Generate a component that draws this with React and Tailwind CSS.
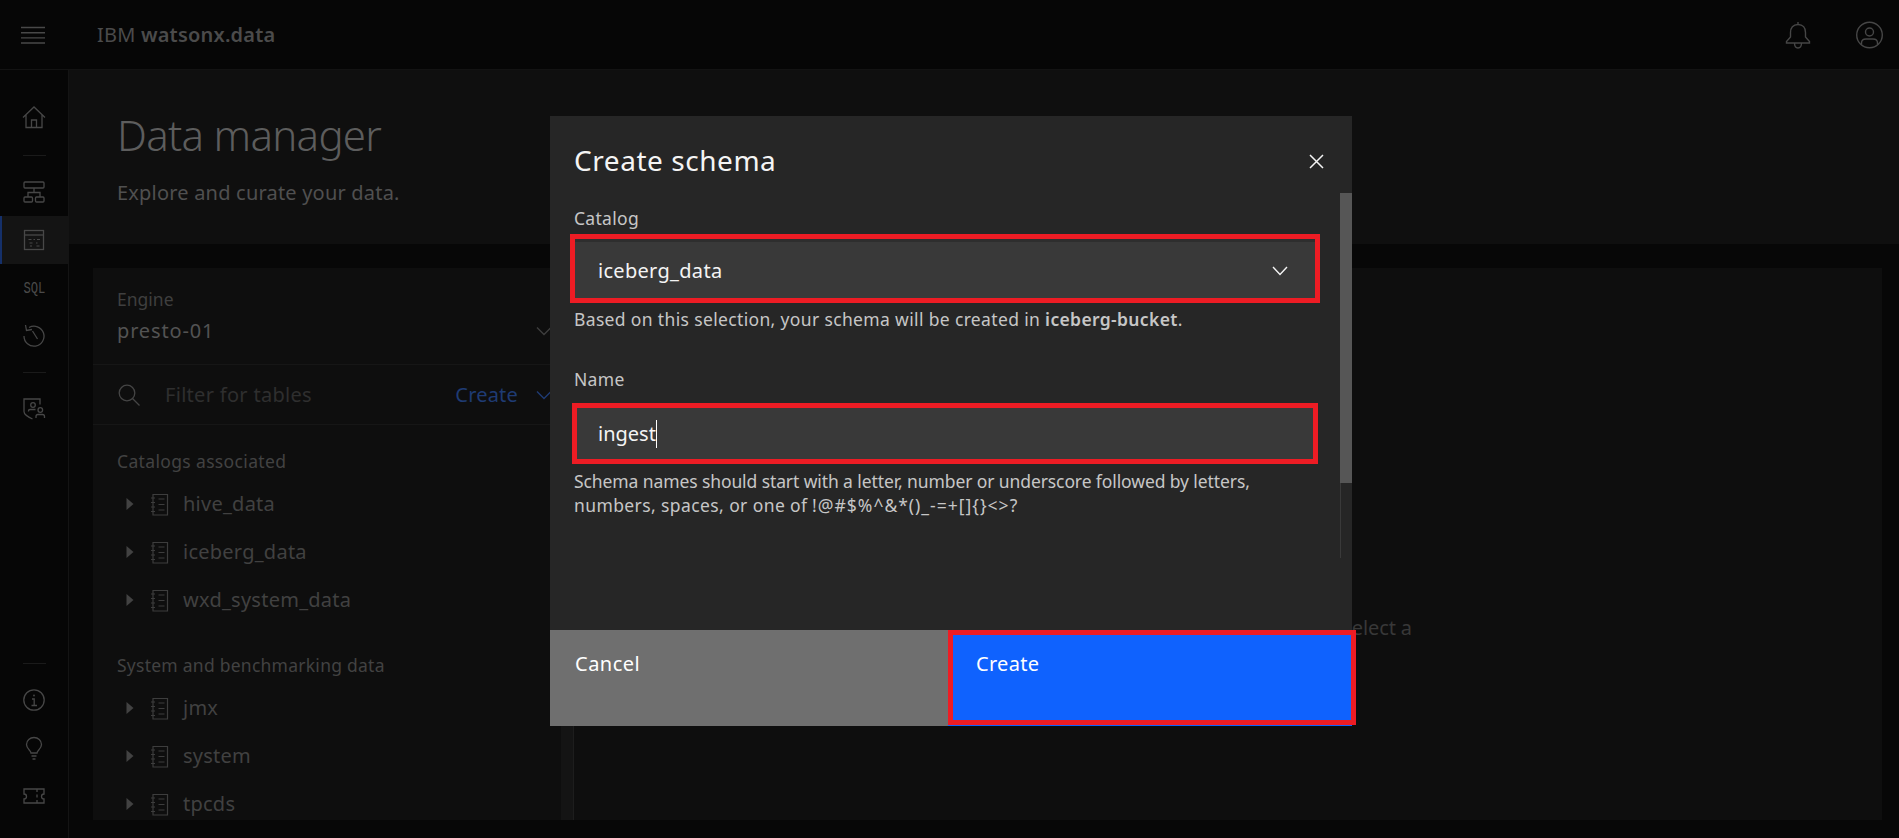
import React from "react";

const Ico = ({ w = 24, h = 24, vb, c = "#474747", sw = 1.3, children }) => (
  <svg width={w} height={h} viewBox={vb || `0 0 ${w} ${h}`} fill="none" stroke={c} strokeWidth={sw} className="block shrink-0">
    {children}
  </svg>
);

const Slot = ({ active, children }) => (
  <div className={`relative flex h-12 w-full items-center justify-center ${active ? "bg-[#141414]" : ""}`}>
    {active && <div className="absolute bottom-0 left-0 top-0 w-[2px] bg-[#15306a]" />}
    {children}
  </div>
);

const Sep = ({ cls }) => <div className={`mx-auto h-px w-[23px] bg-[#1a1a1a] ${cls}`} />;

const Notebook = () => (
  <Ico w={20} h={24} c="#3d3d3d" sw={1.2}>
    <path d="M3 2.5H17.5V23H3Z" />
    <path d="M1 6H5M1 10.5H5M1 15H5M1 19.5H5M8.5 7H14.5M8.5 12.5H14.5M8.5 18H14.5" />
  </Ico>
);

const Caret = () => (
  <svg width="8" height="12" viewBox="0 0 8 12" className="block shrink-0">
    <path d="M0.5 0L7.5 6L0.5 12Z" fill="#424242" />
  </svg>
);

const Row = ({ name }) => (
  <div className="flex h-12 shrink-0 items-center pl-[33px]">
    <Caret />
    <div className="ml-[16px]"><Notebook /></div>
    <span className="ml-[13px] text-[20px] tracking-[0.25px] text-[#414141]">{name}</span>
  </div>
);

const Chevron = ({ c, w = 16 }) => (
  <Ico w={w} h={10} c={c} sw={1.4}>
    <path d={`M1 1.5L${w / 2} 8.5L${w - 1} 1.5`} />
  </Ico>
);

export default function App() {
  return (
    <div className="relative flex h-[838px] w-[1899px] flex-col overflow-hidden bg-[#070707] font-['Noto_Sans',sans-serif]">
      <header className="flex h-[70px] shrink-0 items-center border-b border-[#131313] bg-[#060606]">
        <div className="ml-[21px]">
          <Ico w={24} h={18} c="#484848" sw={1.4}>
            <path d="M0 1.5H24M0 6.7H24M0 11.9H24M0 17H24" />
          </Ico>
        </div>
        <div className="ml-[52px] text-[20px] tracking-[0.2px] text-[#4b4b4b]">
          IBM <span className="font-semibold">watsonx.data</span>
        </div>
        <div className="ml-auto mr-[16px] flex items-center gap-[45px]">
          <Ico w={26} h={28} c="#464646" sw={1.4}>
            <path d="M13 1V3.5M13 3.5C8 3.5 5.5 7 5.5 11.5V16L1.5 20.5V22H24.5V20.5L20.5 16V11.5C20.5 7 18 3.5 13 3.5Z" />
            <path d="M9.5 22C9.5 25 11 27 13 27C15 27 16.5 25 16.5 22" />
          </Ico>
          <Ico w={27} h={28} c="#464646" sw={1.4}>
            <circle cx="13.5" cy="14" r="12.8" />
            <circle cx="13.5" cy="11" r="4" />
            <path d="M5.5 23.5V22C5.5 19.5 7.5 18 10 18H17C19.5 18 21.5 19.5 21.5 22V23.5" />
          </Ico>
        </div>
      </header>

      <div className="flex min-h-0 flex-1">
        <aside className="flex w-[69px] shrink-0 flex-col justify-between border-r border-[#141414] bg-[#060606] pb-[18px] pt-[23px]">
          <div>
            <Slot>
              <Ico c="#474747">
                <path d="M1 12.5L12 2L23 12.5M4 10V22.5H20V10M9.5 22.5V15H14.5V22.5" />
              </Ico>
            </Slot>
            <Sep cls="mb-[12px] mt-[14px]" />
            <Slot>
              <Ico c="#474747">
                <rect x="2" y="2" width="20" height="6" rx="1" />
                <rect x="2" y="17" width="8.5" height="5" rx="1" />
                <rect x="13.5" y="17" width="8.5" height="5" rx="1" />
                <path d="M12 8V12.5M6 17V12.5H18V17" />
              </Ico>
            </Slot>
            <Slot active>
              <Ico c="#484848">
                <rect x="2.5" y="2.5" width="19" height="19" />
                <path d="M2.5 7H21.5" />
                <path strokeWidth="1" d="M6.5 11.5H9.5M11.5 11.5H13M15 11.5H18M7.5 15H10.5M14 15H15.5M8 18H10M14.5 18H17.5" />
              </Ico>
            </Slot>
            <Slot>
              <span className="scale-x-[0.76] pt-[2px] font-['Liberation_Mono',monospace] text-[16px] leading-[24px] text-[#4a4a4a]">SQL</span>
            </Slot>
            <Slot>
              <Ico c="#474747">
                <path d="M7 3.5A10 10 0 1 1 2 12M3.5 1L4.5 6.5L10 5.5" />
                <path d="M10.5 7L15.5 15" />
              </Ico>
            </Slot>
            <Sep cls="mb-[11px] mt-[12px]" />
            <Slot>
              <Ico c="#474747">
                <path d="M18 8.5V3H2V15.5C2 18.5 6 21 10.5 23" />
                <circle cx="11" cy="9" r="2.3" />
                <path d="M6.5 15.5V15C6.5 14 7.2 13.5 8 13.5H13.5" />
                <circle cx="18.3" cy="14" r="2.3" />
                <path d="M14 22V20.5C14 19 15 18.5 16 18.5H20.5C21.5 18.5 22.5 19 22.5 20.5V22" />
              </Ico>
            </Slot>
          </div>
          <div>
            <Sep cls="mb-[12px]" />
            <Slot>
              <Ico c="#474747">
                <circle cx="12" cy="12" r="10.2" />
                <path d="M10 11H12.2V17.5M9.5 17.5H15" />
                <circle cx="12" cy="7.5" r="0.9" fill="#474747" stroke="none" />
              </Ico>
            </Slot>
            <Slot>
              <Ico c="#474747">
                <path d="M9 17C9 14.5 4.5 13 4.5 8.5C4.5 4.2 8 1.5 12 1.5C16 1.5 19.5 4.2 19.5 8.5C19.5 13 15 14.5 15 17Z" />
                <path d="M9.5 20H14.5M10.5 23H13.5" />
              </Ico>
            </Slot>
            <Slot>
              <Ico c="#474747">
                <path d="M2 5H22V10A2.5 2.5 0 0 0 22 15V19H2V15A2.5 2.5 0 0 0 2 10Z" />
                <path d="M15 5V8M15 10.5V13.5M15 16V19" />
              </Ico>
            </Slot>
          </div>
        </aside>

        <main className="flex min-w-0 flex-1 flex-col">
          <div className="h-[174px] shrink-0 bg-[#0f0f0f] pl-[48px] pt-[38px]">
            <h1 className="text-[42px] font-light leading-[54px] tracking-[-0.7px] text-[#5d5d5d]">Data manager</h1>
            <p className="mt-[17px] text-[20px] leading-[28px] tracking-[0.2px] text-[#505050]">Explore and curate your data.</p>
          </div>
          <div className="min-h-0 flex-1 pb-[18px] pl-[24px] pr-[17px] pt-[24px]">
            <div className="flex h-full overflow-hidden bg-[#0e0e0e]">
              <div className="flex w-[468px] shrink-0 flex-col overflow-hidden">
                <div className="h-[97px] shrink-0 border-b border-[#161616] pl-[24px] pt-[19px]">
                  <div className="text-[17.5px] leading-[24px] text-[#3f3f3f]">Engine</div>
                  <div className="mt-[8px] flex items-center justify-between pr-[9px]">
                    <span className="text-[20px] leading-[24px] tracking-[0.85px] text-[#535353]">presto-01</span>
                    <Chevron c="#3e3e3e" />
                  </div>
                </div>
                <div className="flex h-[60px] shrink-0 items-center border-b border-[#161616] pl-[25px] pr-[9px]">
                  <Ico w={22} h={22} c="#454545" sw={1.3}>
                    <circle cx="9" cy="9" r="7.8" />
                    <path d="M14.5 14.5L21.5 21.5" />
                  </Ico>
                  <span className="ml-[25px] text-[20px] tracking-[0.3px] text-[#2f2f2f]">Filter for tables</span>
                  <span className="ml-auto text-[20px] tracking-[0.2px] text-[#1f3b73]">Create</span>
                  <div className="ml-[18px]"><Chevron c="#1f3b73" /></div>
                </div>
                <div className="pl-[24px] pt-[24px] text-[17.5px] leading-[24px] tracking-[0.35px] text-[#424242]">Catalogs associated</div>
                <div className="mt-[7px] flex flex-col">
                  <Row name="hive_data" />
                  <Row name="iceberg_data" />
                  <Row name="wxd_system_data" />
                </div>
                <div className="pl-[24px] pt-[29px] text-[17.5px] leading-[24px] tracking-[0.25px] text-[#424242]">System and benchmarking data</div>
                <div className="mt-[7px] flex flex-col">
                  <Row name="jmx" />
                  <Row name="system" />
                  <Row name="tpcds" />
                </div>
              </div>
              <div className="w-[13px] shrink-0 border-r border-[#1d1d1d] bg-[#141414]" />
              <div className="flex flex-1 justify-end pr-[470px] pt-[346px] text-[20px] leading-[28px] tracking-[-0.1px] text-[#383838]">select a</div>
            </div>
          </div>
        </main>
      </div>

      <section className="absolute left-[550px] top-[116px] flex h-[610px] w-[802px] flex-col bg-[#262626]">
        <div className="relative h-[81px] shrink-0 pl-[24px] pt-[24px]">
          <h2 className="text-[28px] leading-[40px] tracking-[0.55px] text-[#f4f4f4]">Create schema</h2>
          <div className="absolute right-[28px] top-[38px]">
            <Ico w={15} h={15} c="#f4f4f4" sw={1.5}>
              <path d="M1 1L14 14M14 1L1 14" />
            </Ico>
          </div>
        </div>
        <div className="relative min-h-0 flex-1 pl-[24px] pr-[37px] pt-[9px]">
          <div className="text-[17.5px] leading-[24px] tracking-[0.3px] text-[#c6c6c6]">Catalog</div>
          <div className="mt-[9px] flex h-[60px] items-center justify-between border-t-[3px] border-[#2e2e2e] bg-[#393939] pl-[24px] pr-[27px] pt-[1px]">
            <span className="text-[20px] tracking-[0.3px] text-[#f4f4f4]">iceberg_data</span>
            <Ico w={16} h={10} c="#f4f4f4" sw={1.4}><path d="M1 1L8 8.5L15 1" /></Ico>
          </div>
          <p className="mt-[8px] text-[17.5px] leading-[24px] tracking-[0.35px] text-[#c6c6c6]">
            Based on this selection, your schema will be created in <b className="font-semibold">iceberg-bucket</b>.
          </p>
          <div className="mt-[36px] text-[17.5px] leading-[24px] tracking-[0.3px] text-[#c6c6c6]">Name</div>
          <div className="mt-[13px] flex h-[60px] items-center bg-[#393939] pl-[24px]">
            <span className="text-[20px] tracking-[0px] text-[#f4f4f4]">ingest</span>
            <span className="h-[28px] w-[1.5px] bg-white" />
          </div>
          <p className="mt-[5px] text-[17.5px] leading-[24px] text-[#c6c6c6]">
            <span className="tracking-[-0.1px]">Schema names should start with a letter, number or underscore followed by letters,</span>{" "}
            <span className="tracking-[0.4px]">numbers, spaces, or one of</span>{" "}
            <span className="tracking-[1px]">!@#$%^&amp;*()_-=+[]{"{}"}&lt;&gt;?</span>
          </p>
          <div className="absolute bottom-[72px] right-0 top-[-4px] w-[12px] bg-[#262626]">
            <div className="h-[290px] w-full bg-[#565656]" />
            <div className="h-[75px] w-px bg-[#3a3a3a]" />
          </div>
        </div>
        <div className="flex h-[96px] shrink-0">
          <div className="w-[398px] bg-[#6f6f6f] pl-[25px] pt-[22px] text-[20px] leading-[24px] tracking-[0.5px] text-white">Cancel</div>
          <div className="flex-1 bg-[#0f62fe] pl-[28px] pt-[22px] text-[20px] leading-[24px] tracking-[0.3px] text-white">Create</div>
        </div>
        <div className="absolute left-[20px] top-[118px] h-[69px] w-[750px] border-[5px] border-[#ed1c24]" />
        <div className="absolute left-[22px] top-[287px] h-[61px] w-[746px] border-[5px] border-[#ed1c24]" />
        <div className="absolute left-[398px] top-[514px] h-[95px] w-[408px] border-[5px] border-[#ed1c24]" />
      </section>
    </div>
  );
}
